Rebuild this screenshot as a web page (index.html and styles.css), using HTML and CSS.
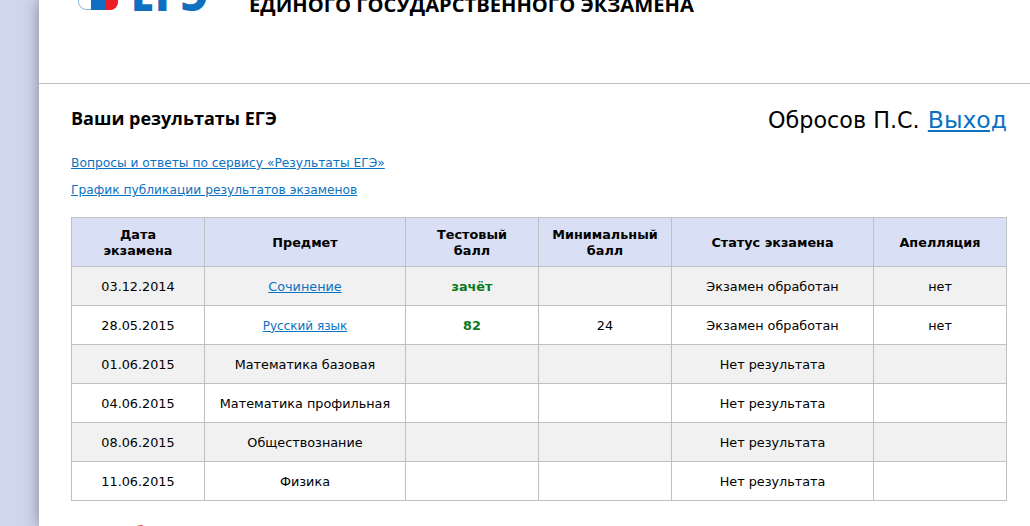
FILE: index.html
```html
<!DOCTYPE html>
<html lang="ru">
<head>
<meta charset="utf-8">
<title>Результаты ЕГЭ</title>
<link rel="stylesheet" href="styles.css">
</head>
<body>
<div class="page">
  <header class="site-header">
    <div class="logo">
      <svg class="logo-mark" width="40" height="30" viewBox="0 0 40 30">
        <rect x="0.5" y="0.5" width="39" height="29" rx="8" fill="#fff" stroke="#7fb2de"/>
        <path d="M13 0H27V30H13Z" fill="#0f6fc0"/>
        <path d="M27 0H40V22a8 8 0 0 1-8 8H27Z" fill="#ee1c25"/>
      </svg>
      <span class="logo-text">ЕГЭ</span>
    </div>
    <div class="site-title">ЕДИНОГО ГОСУДАРСТВЕННОГО ЭКЗАМЕНА</div>
  </header>
  <main class="content">
    <div class="top-row">
      <h1 class="heading">Ваши результаты ЕГЭ</h1>
      <div class="user"><span class="user-name">Обросов П.С.</span> <a class="logout" href="#">Выход</a></div>
    </div>
    <p class="info-link"><a href="#">Вопросы и ответы по сервису «Результаты ЕГЭ»</a></p>
    <p class="info-link"><a href="#">График публикации результатов экзаменов</a></p>
    <table class="results">
      <colgroup>
        <col class="c-narrow"><col class="c-subject"><col class="c-narrow"><col class="c-narrow"><col class="c-status"><col class="c-narrow">
      </colgroup>
      <thead>
        <tr><th>Дата<br>экзамена</th><th>Предмет</th><th>Тестовый<br>балл</th><th>Минимальный<br>балл</th><th>Статус экзамена</th><th>Апелляция</th></tr>
      </thead>
      <tbody>
        <tr><td>03.12.2014</td><td><a href="#">Сочинение</a></td><td class="score">зачёт</td><td></td><td>Экзамен обработан</td><td>нет</td></tr>
        <tr><td>28.05.2015</td><td><a class="tight" href="#">Русский язык</a></td><td class="score">82</td><td>24</td><td>Экзамен обработан</td><td>нет</td></tr>
        <tr><td>01.06.2015</td><td>Математика базовая</td><td></td><td></td><td>Нет результата</td><td></td></tr>
        <tr><td>04.06.2015</td><td>Математика профильная</td><td></td><td></td><td>Нет результата</td><td></td></tr>
        <tr><td>08.06.2015</td><td>Обществознание</td><td></td><td></td><td>Нет результата</td><td></td></tr>
        <tr><td>11.06.2015</td><td>Физика</td><td></td><td></td><td>Нет результата</td><td></td></tr>
      </tbody>
    </table>
    <p class="note">Если вы бы хотели</p>
  </main>
</div>
</body>
</html>
```
FILE: styles.css
```css
html, body {
  margin: 0;
  height: 100%;
  overflow: hidden;
}
body {
  background: #d0d6ec;
  font-family: "DejaVu Sans", Verdana, sans-serif;
  color: #000;
}
a {
  color: #0a72c2;
}
.page {
  margin-left: 39px;
  height: 100%;
  background: #fff;
  box-shadow: 0 0 14px rgba(40, 45, 70, 0.5);
  overflow: hidden;
}
.site-header {
  display: flex;
  align-items: flex-end;
  height: 83px;
  border-bottom: 1px solid #c0c0c0;
  padding-left: 39px;
  box-sizing: content-box;
}
.logo {
  display: flex;
  align-items: flex-start;
  gap: 13px;
  align-self: flex-start;
  margin-top: -20px;
  height: 30px;
  width: 171px;
  flex: none;
}
.logo-mark {
  flex: none;
}
.logo-text {
  font-family: "Open Sans", sans-serif;
  font-weight: 800;
  font-size: 42px;
  line-height: 30px;
  color: #0f6fc0;
  letter-spacing: 1px;
}
.site-title {
  align-self: flex-start;
  margin-top: -9px;
  font-family: "Open Sans", sans-serif;
  font-weight: 700;
  font-size: 20.15px;
  line-height: 26px;
  white-space: nowrap;
}
.content {
  padding: 0 23px 0 32px;
}
.top-row {
  display: flex;
  justify-content: space-between;
  align-items: flex-start;
  height: 66px;
  padding-top: 19px;
  box-sizing: border-box;
}
.heading {
  margin: 0;
  font-family: "Open Sans", sans-serif;
  font-size: 18px;
  font-weight: 700;
  line-height: 30px;
}
.user {
  line-height: 32px;
  margin-top: 1px;
  white-space: nowrap;
}
.user-name {
  font-size: 22.3px;
}
.logout {
  font-size: 23.5px;
  margin-left: 3px;
}
.info-link {
  margin: 0;
  font-size: 12.25px;
  line-height: 27px;
}
.results {
  width: 936px;
  margin-top: 13px;
  border-collapse: collapse;
  table-layout: fixed;
  font-size: 12.8px;
}
.c-narrow {
  width: 133px;
}
.c-subject {
  width: 201px;
}
.c-status {
  width: 202px;
}
.results th,
.results td {
  border: 1px solid #c0c0c0;
  padding: 0;
  text-align: center;
}
.results th {
  height: 47px;
  padding-top: 1px;
  background: #d9dff5;
  line-height: 16px;
  font-weight: 700;
}
.results td {
  height: 38px;
}
.results tbody tr:nth-child(odd) td {
  background: #f1f1f1;
}
.results .score {
  color: #0b7a1e;
  font-weight: 700;
}
.results .tight {
  font-size: 12px;
}
.note {
  margin: 22px 0 0;
  color: #f00;
  font-size: 13px;
  font-weight: 700;
  line-height: 16px;
}
```
